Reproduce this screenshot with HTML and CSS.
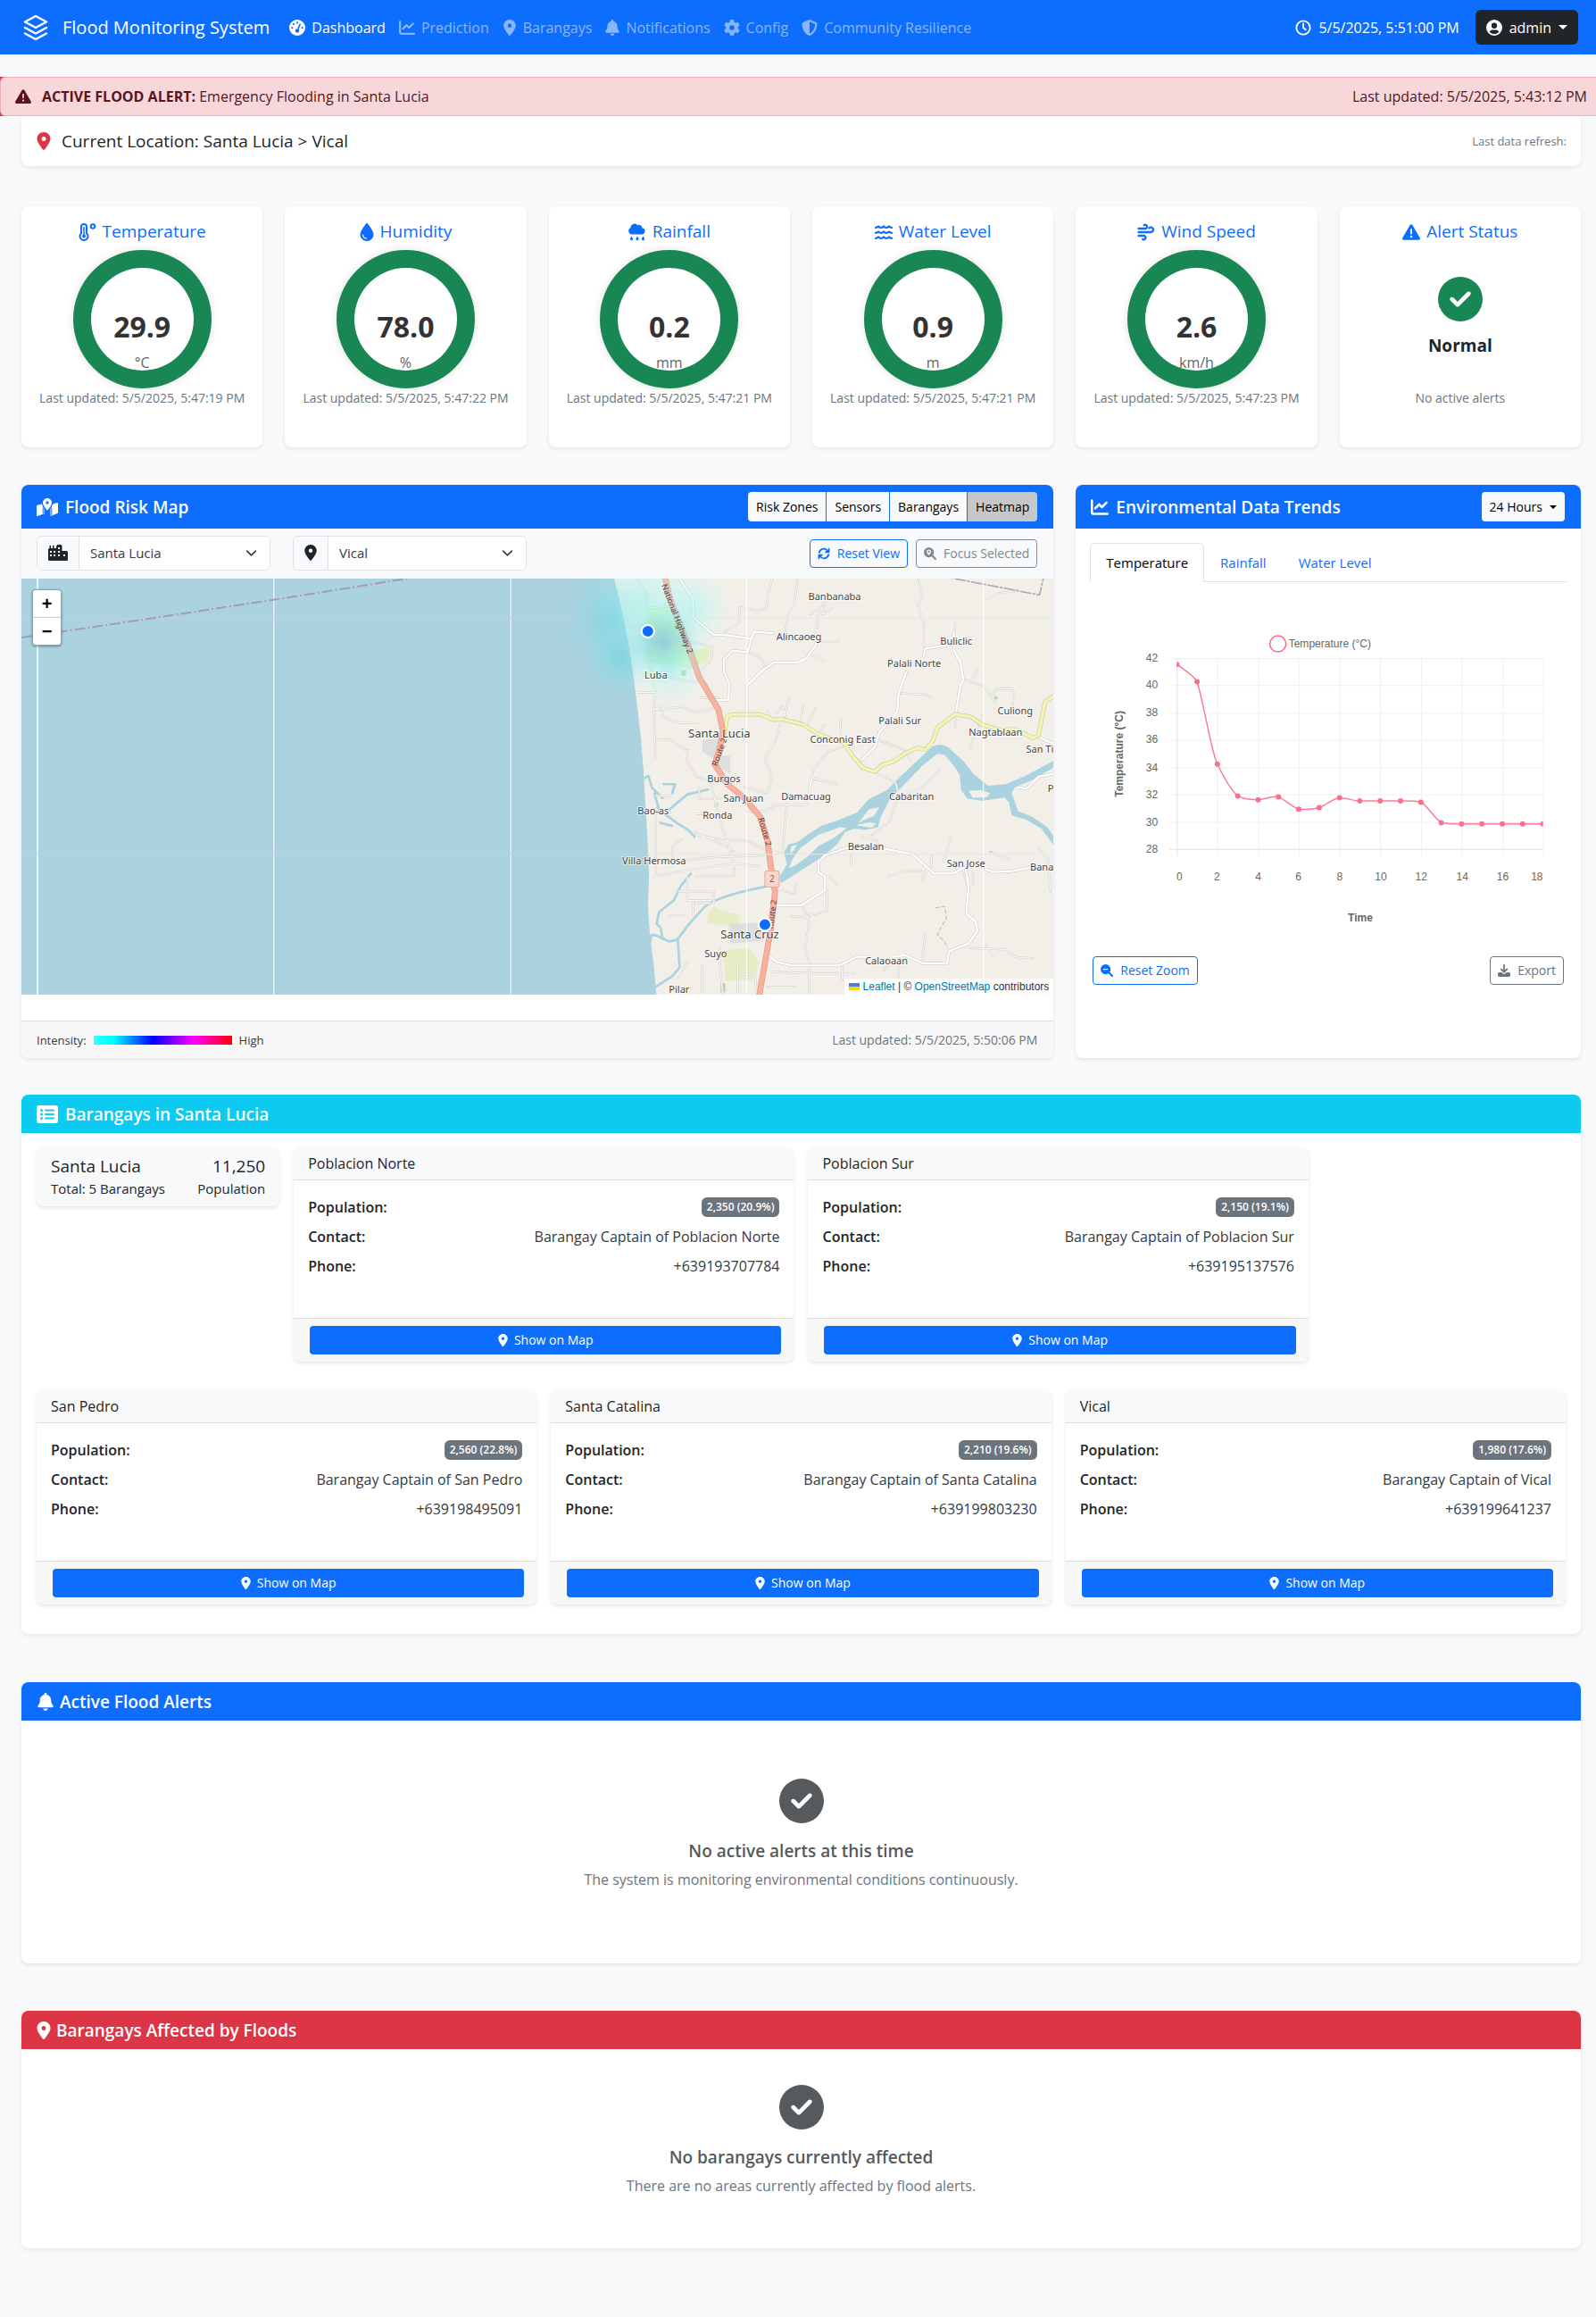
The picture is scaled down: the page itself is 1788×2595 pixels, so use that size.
FILE: index.html
```html
<!DOCTYPE html>
<html lang="en">
<head>
<meta charset="utf-8">
<meta name="viewport" content="width=device-width, initial-scale=1">
<title>Flood Monitoring System</title>
<link rel="stylesheet" href="styles.css">
</head>
<body>
<svg class="sprite" aria-hidden="true">
  <symbol id="i-layers" viewBox="0 0 28 30"><g fill="none" stroke="currentColor" stroke-width="2.500" stroke-linejoin="round" stroke-linecap="round"><path d="M14 2 26 8.500 14 15 2 8.500z"/><path d="M2 15l12 6.500L26 15M2 21.500L14 28l12-6.500"/></g></symbol>
  <symbol id="i-dash" viewBox="0 0 512 512"><path fill="currentColor" fill-rule="evenodd" d="M0 256a256 256 0 1 1 512 0A256 256 0 1 1 0 256zM288 96a32 32 0 1 0-64 0 32 32 0 1 0 64 0zM256 416c35.300 0 64-28.700 64-64 0-17.400-6.900-33.100-18.100-44.600L366 161.700c5.300-12.100-.2-26.300-12.300-31.600s-26.300.2-31.600 12.300L257.900 288H256c-35.300 0-64 28.700-64 64s28.700 64 64 64zM176 144a32 32 0 1 0-64 0 32 32 0 1 0 64 0zM96 288a32 32 0 1 0 0-64 32 32 0 1 0 0 64zm352-32a32 32 0 1 0-64 0 32 32 0 1 0 64 0z"/></symbol>
  <symbol id="i-chart" viewBox="0 0 512 512"><path fill="currentColor" d="M64 64c0-17.700-14.300-32-32-32S0 46.300 0 64V400c0 44.200 35.800 80 80 80H480c17.700 0 32-14.300 32-32s-14.300-32-32-32H80c-8.800 0-16-7.200-16-16V64zm406.600 86.600c12.500-12.500 12.500-32.800 0-45.300s-32.800-12.500-45.300 0L320 210.700l-57.400-57.400c-12.500-12.500-32.800-12.500-45.300 0l-112 112c-12.500 12.500-12.500 32.800 0 45.300s32.800 12.500 45.300 0L240 221.300l57.400 57.400c12.500 12.500 32.800 12.500 45.300 0l128-128z"/></symbol>
  <symbol id="i-pin" viewBox="0 0 384 512"><path fill="currentColor" d="M215.700 499.200C267 435 384 279.400 384 192C384 86 298 0 192 0S0 86 0 192c0 87.400 117 243 168.300 307.200c12.300 15.300 35.100 15.300 47.400 0zM192 128a64 64 0 1 1 0 128 64 64 0 1 1 0-128z"/></symbol>
  <symbol id="i-bell" viewBox="0 0 448 512"><path fill="currentColor" d="M224 0c-17.700 0-32 14.300-32 32V51.200C119 66 64 130.600 64 208v18.800c0 47-17.300 92.400-48.500 127.600l-7.400 8.300c-8.400 9.400-10.400 22.900-5.300 34.400S19.400 416 32 416H416c12.600 0 24-7.400 29.200-18.900s3.100-25-5.300-34.400l-7.400-8.300C401.300 319.200 384 273.900 384 226.800V208c0-77.400-55-142-128-156.800V32c0-17.700-14.300-32-32-32zm45.300 493.300c12-12 18.700-28.300 18.700-45.300H224 160c0 17 6.700 33.300 18.700 45.300s28.300 18.700 45.300 18.700s33.300-6.700 45.300-18.700z"/></symbol>
  <symbol id="i-gear" viewBox="0 0 512 512"><path fill="currentColor" d="M495.900 166.600c3.200 8.700 .5 18.400-6.400 24.600l-43.300 39.400c1.100 8.300 1.700 16.800 1.700 25.400s-.6 17.100-1.700 25.400l43.300 39.400c6.900 6.200 9.600 15.900 6.400 24.600c-4.400 11.900-9.700 23.300-15.800 34.300l-4.700 8.100c-6.600 11-14 21.400-22.100 31.200c-5.900 7.200-15.700 9.600-24.500 6.800l-55.700-17.700c-13.400 10.300-28.200 18.900-44 25.400l-12.500 57.100c-2 9.100-9 16.300-18.200 17.800c-13.800 2.300-28 3.500-42.500 3.500s-28.700-1.200-42.500-3.500c-9.200-1.500-16.200-8.700-18.200-17.800l-12.500-57.100c-15.800-6.500-30.600-15.100-44-25.400L83.100 425.900c-8.800 2.800-18.600 .3-24.500-6.800c-8.100-9.800-15.500-20.200-22.100-31.200l-4.700-8.100c-6.100-11-11.400-22.400-15.800-34.300c-3.200-8.700-.5-18.400 6.400-24.600l43.300-39.400C64.600 273.100 64 264.600 64 256s.6-17.100 1.700-25.400L22.400 191.200c-6.900-6.200-9.600-15.900-6.400-24.600c4.400-11.900 9.700-23.300 15.800-34.300l4.700-8.100c6.600-11 14-21.400 22.100-31.200c5.900-7.200 15.700-9.600 24.500-6.800l55.700 17.700c13.400-10.300 28.200-18.900 44-25.400l12.500-57.100c2-9.100 9-16.300 18.200-17.800C227.300 1.200 241.500 0 256 0s28.700 1.200 42.500 3.500c9.200 1.500 16.200 8.700 18.200 17.800l12.500 57.100c15.800 6.500 30.600 15.100 44 25.400l55.700-17.700c8.800-2.800 18.600-.3 24.500 6.800c8.100 9.800 15.500 20.200 22.100 31.200l4.700 8.100c6.100 11 11.400 22.400 15.800 34.300zM256 336a80 80 0 1 0 0-160 80 80 0 1 0 0 160z"/></symbol>
  <symbol id="i-shield" viewBox="0 0 512 512"><path fill="currentColor" d="M256 0c4.600 0 9.200 1 13.400 2.900L457.700 82.800c22 9.300 38.400 31 38.300 57.200c-.5 99.200-41.300 280.700-213.600 363.200c-16.700 8-36.100 8-52.800 0C57.300 420.700 16.500 239.200 16 140c-.1-26.200 16.300-47.900 38.300-57.200L242.700 2.900C246.800 1 251.400 0 256 0zm0 66.800V444.800C394 378 431.100 230.100 432 141.400L256 66.800z"/></symbol>
  <symbol id="i-clock" viewBox="0 0 20 20"><g fill="none" stroke="currentColor" stroke-width="2" stroke-linecap="round"><circle cx="10" cy="10" r="8.500"/><path d="M10 5v5l3 2.500"/></g></symbol>
  <symbol id="i-user" viewBox="0 0 20 20"><path fill="currentColor" fill-rule="evenodd" d="M10 0a10 10 0 1 1 0 20 10 10 0 0 1 0-20zm0 4a3.500 3.500 0 1 0 0 7 3.500 3.500 0 0 0 0-7zm-6 11.200A8 8 0 0 0 10 18a8 8 0 0 0 6-2.800C15 13.400 13.500 12.800 12 12.800H8c-1.500 0-3 .6-4 2.400z"/></symbol>
  <symbol id="i-warn" viewBox="0 0 512 512"><path fill="currentColor" d="M256 32c14.200 0 27.300 7.500 34.500 19.800l216 368c7.300 12.400 7.300 27.700 .2 40.100S486.300 480 472 480H40c-14.300 0-27.600-7.700-34.700-20.100s-7-27.800 .2-40.100l216-368C228.700 39.500 241.800 32 256 32zm0 128c-13.300 0-24 10.700-24 24V296c0 13.300 10.700 24 24 24s24-10.700 24-24V184c0-13.300-10.700-24-24-24zm32 224a32 32 0 1 0-64 0 32 32 0 1 0 64 0z"/></symbol>
  <symbol id="i-check" viewBox="0 0 512 512"><path fill="currentColor" d="M256 512A256 256 0 1 0 256 0a256 256 0 1 0 0 512zM369 209L241 337c-9.400 9.400-24.600 9.400-33.900 0l-64-64c-9.400-9.400-9.400-24.600 0-33.900s24.600-9.400 33.900 0l47 47L335 175c9.400-9.400 24.600-9.400 33.900 0s9.400 24.600 0 33.900z"/></symbol>
  <symbol id="i-temp" viewBox="0 0 20 20"><g fill="none" stroke="currentColor" stroke-width="2"><path d="M3 4a3 3 0 0 1 6 0v7.200a4.500 4.500 0 1 1-6 0z"/><circle cx="16" cy="3.500" r="2.300"/></g><path d="M6 4v11" stroke="currentColor" stroke-width="1.500"/><circle cx="6" cy="14.500" r="2" fill="currentColor"/></symbol>
  <symbol id="i-drop" viewBox="0 0 384 512"><path fill="currentColor" d="M192 512C86 512 0 426 0 320C0 228.800 130.200 57.700 166.600 11.700C172.600 4.200 181.500 0 191.100 0h1.800c9.600 0 18.500 4.200 24.500 11.700C253.800 57.700 384 228.800 384 320c0 106-86 192-192 192zM96 336c0-8.800-7.200-16-16-16s-16 7.200-16 16c0 61.900 50.100 112 112 112c8.800 0 16-7.200 16-16s-7.200-16-16-16c-44.200 0-80-35.800-80-80z"/></symbol>
  <symbol id="i-rain" viewBox="0 0 20 20"><path fill="currentColor" d="M4 12.500A4 4 0 0 1 2.300 5 4.500 4.500 0 0 1 10 2a4 4 0 0 1 5.500 3.300A3.700 3.700 0 0 1 16 12.500zM3.500 14.500c1 1.700 1.500 2.300 1.500 3.200a1.500 1.500 0 0 1-3 0c0-.9.500-1.500 1.500-3.200zm6.500 0c1 1.700 1.500 2.300 1.500 3.200a1.500 1.500 0 0 1-3 0c0-.9.500-1.500 1.500-3.200zm6.500 0c1 1.700 1.500 2.300 1.500 3.200a1.500 1.500 0 0 1-3 0c0-.9.500-1.500 1.500-3.200z"/></symbol>
  <symbol id="i-water" viewBox="0 0 22 20"><path fill="none" stroke="currentColor" stroke-width="2.400" stroke-linecap="round" d="M1 4.500c2 0 3-1.500 3.500-1.500 1 1 2 1.500 3.200 1.500S10 4 11 3c1 1 2 1.500 3.200 1.500S16.500 4 17.500 3c.5 0 1.500 1.500 3.500 1.500M1 11c2 0 3-1.500 3.500-1.500 1 1 2 1.500 3.200 1.500s2.300-.5 3.300-1.500c1 1 2 1.500 3.200 1.500s2.300-.5 3.300-1.500c.5 0 1.500 1.500 3.500 1.500M1 17.500c2 0 3-1.500 3.500-1.500 1 1 2 1.500 3.200 1.500S10 17 11 16c1 1 2 1.500 3.200 1.500s2.300-.5 3.300-1.500c.5 0 1.500 1.500 3.500 1.500"/></symbol>
  <symbol id="i-wind" viewBox="0 0 20 20"><path fill="none" stroke="currentColor" stroke-width="2.300" stroke-linecap="round" d="M1.500 6H9.500a2.200 2.200 0 1 0-1.800-4M1.500 10h14a2.700 2.700 0 1 0-2.200-4.500M1.500 14h6.500a2.200 2.200 0 1 1-1.800 4"/></symbol>
  <symbol id="i-map" viewBox="0 0 24 20"><path fill="currentColor" fill-rule="evenodd" d="M12 0a5 5 0 0 1 5 5c0 2.600-3 6.500-4.300 8-.4.500-1 .5-1.400 0C10 11.500 7 7.600 7 5a5 5 0 0 1 5-5zm0 3.300a1.700 1.700 0 1 0 0 3.400 1.700 1.700 0 0 0 0-3.400zM6 6.500c.4 2.200 1.600 4.300 2.500 5.700V17.500l7 2V12c1.200-1.700 2.200-3.600 2.500-5.200L23 5c.6-.2 1 .1 1 .7V16c0 .5-.3.900-.8 1.100L16.500 19.700 8 17.500 1 20c-.6.200-1-.1-1-.7V8.800c0-.4.300-.8.700-1z"/><path d="M7.200 11v6.500M16.800 11v8" stroke="#0d6efd" stroke-width="1"/></symbol>
  <symbol id="i-city" viewBox="0 0 22 18"><path fill="currentColor" d="M0 5 1.500 4V1h1.500v3H5V1h1.500v3H9V2.500C9 1.500 10 0 11 0h2.500C15 0 15.500 1 15.500 2v5H20c1.200 0 2 .8 2 2v7.500c0 .9-.6 1.500-1.500 1.500h-19C.6 18 0 17.400 0 16.500z"/><path fill="#f8f9fa" d="M2 7h2v2H2zm4 0h2v2H6zm-4 4h2v2H2zm4 0h2v2H6zm5-8h2v2h-2zm0 4h2v2h-2zm0 4h2v2h-2zm6 0h2v2h-2z"/></symbol>
  <symbol id="i-sync" viewBox="0 0 20 20"><g fill="none" stroke="currentColor" stroke-width="2.600" stroke-linecap="round" stroke-linejoin="round"><path d="M2.500 8.500A7.500 7.500 0 0 1 15.500 5L18 7.500M17.500 11.500A7.500 7.500 0 0 1 4.500 15L2 12.500M18 2.500v5h-5M2 17.500v-5h5"/></g></symbol>
  <symbol id="i-focus" viewBox="0 0 20 20"><circle cx="8" cy="8" r="8" fill="currentColor"/><path d="m13 13 5.500 5.500" stroke="currentColor" stroke-width="3" stroke-linecap="round"/><path fill="#f8f9fa" fill-rule="evenodd" d="M8 3.500A3.500 3.500 0 0 1 11.500 7C11.500 9 9.500 11.300 8 12.500 6.500 11.300 4.500 9 4.500 7A3.500 3.500 0 0 1 8 3.500zm0 2a1.500 1.500 0 1 0 0 3 1.500 1.500 0 0 0 0-3z"/></symbol>
  <symbol id="i-minus" viewBox="0 0 20 20"><circle cx="8" cy="8" r="8" fill="currentColor"/><path d="m13 13 5.500 5.500" stroke="currentColor" stroke-width="3" stroke-linecap="round"/><path d="M5 8h6" stroke="#fff" stroke-width="2" stroke-linecap="round"/></symbol>
  <symbol id="i-down" viewBox="0 0 20 20"><path fill="currentColor" d="M8.700 1.300a1.300 1.300 0 0 1 2.600 0v8l2.600-2.500c1.200-1 2.800.6 1.800 1.800L11 13.300c-.6.600-1.400.6-2 0L4.300 8.600c-1-1.200.6-2.800 1.800-1.800l2.600 2.500zM2.500 13h3.800l1.500 1.500c1.200 1.200 3.200 1.200 4.400 0l1.500-1.500h3.800c1.400 0 2.500 1.100 2.500 2.500v2c0 1.400-1.100 2.500-2.500 2.500h-15C1.100 20 0 18.900 0 17.500v-2C0 14.100 1.100 13 2.500 13z"/></symbol>
  <symbol id="i-list" viewBox="0 0 24 20"><rect width="24" height="20" rx="3" fill="currentColor"/><g fill="#0dcaf0"><circle cx="5.500" cy="5.500" r="1.500"/><circle cx="5.500" cy="10" r="1.500"/><circle cx="5.500" cy="14.500" r="1.500"/><rect x="9" y="4.500" width="11" height="2" rx="1"/><rect x="9" y="9" width="11" height="2" rx="1"/><rect x="9" y="13.500" width="11" height="2" rx="1"/></g></symbol>
</svg>

<nav class="navbar" aria-label="Main">
  <a class="brand" href="#"><svg class="ic ic-brand"><use href="#i-layers"/></svg>Flood Monitoring System</a>
  <div class="nav-links">
    <a class="active" href="#"><svg class="ic"><use href="#i-dash"/></svg>Dashboard</a>
    <a href="#"><svg class="ic"><use href="#i-chart"/></svg>Prediction</a>
    <a href="#"><svg class="ic ic-narrow"><use href="#i-pin"/></svg>Barangays</a>
    <a href="#"><svg class="ic ic-narrow"><use href="#i-bell"/></svg>Notifications</a>
    <a href="#"><svg class="ic"><use href="#i-gear"/></svg>Config</a>
    <a href="#"><svg class="ic"><use href="#i-shield"/></svg>Community Resilience</a>
  </div>
  <div class="nav-clock"><svg class="ic"><use href="#i-clock"/></svg>5/5/2025, 5:51:00 PM</div>
  <button class="user-btn" type="button"><svg class="ic"><use href="#i-user"/></svg>admin<span class="caret"></span></button>
</nav>

<div class="alert-wrap">
  <div class="alert" role="alert">
    <svg class="ic"><use href="#i-warn"/></svg>
    <p><strong>ACTIVE FLOOD ALERT:</strong> Emergency Flooding in Santa Lucia</p>
    <span class="push">Last updated: 5/5/2025, 5:43:12 PM</span>
  </div>
</div>

<main class="page">
  <section class="location">
    <svg class="ic ic-loc"><use href="#i-pin"/></svg>
    <h1>Current Location: Santa Lucia &gt; Vical</h1>
    <span class="push small muted">Last data refresh:</span>
  </section>

  <section class="grid gauges">
    <article class="card gauge"><h2><svg class="ic"><use href="#i-temp"/></svg>Temperature</h2><div class="ring"><div class="dial"><b>29.9</b><span>°C</span></div></div><p>Last updated: 5/5/2025, 5:47:19 PM</p></article>
    <article class="card gauge"><h2><svg class="ic ic-narrow"><use href="#i-drop"/></svg>Humidity</h2><div class="ring"><div class="dial"><b>78.0</b><span>%</span></div></div><p>Last updated: 5/5/2025, 5:47:22 PM</p></article>
    <article class="card gauge"><h2><svg class="ic"><use href="#i-rain"/></svg>Rainfall</h2><div class="ring"><div class="dial"><b>0.2</b><span>mm</span></div></div><p>Last updated: 5/5/2025, 5:47:21 PM</p></article>
    <article class="card gauge"><h2><svg class="ic"><use href="#i-water"/></svg>Water Level</h2><div class="ring"><div class="dial"><b>0.9</b><span>m</span></div></div><p>Last updated: 5/5/2025, 5:47:21 PM</p></article>
    <article class="card gauge"><h2><svg class="ic"><use href="#i-wind"/></svg>Wind Speed</h2><div class="ring"><div class="dial"><b>2.6</b><span>km/h</span></div></div><p>Last updated: 5/5/2025, 5:47:23 PM</p></article>
    <article class="card gauge"><h2><svg class="ic"><use href="#i-warn"/></svg>Alert Status</h2><div class="status"><svg class="ic-big"><use href="#i-check"/></svg><strong>Normal</strong></div><p>No active alerts</p></article>
  </section>

  <section class="grid panels">
    <article class="card map-card">
      <header class="card-head tall"><svg class="ic-wide"><use href="#i-map"/></svg><h2>Flood Risk Map</h2>
        <div class="btn-group push"><button type="button">Risk Zones</button><button type="button">Sensors</button><button type="button">Barangays</button><button type="button" class="on">Heatmap</button></div>
      </header>
      <div class="toolbar">
        <div class="pick"><label for="town" aria-label="Municipality"><svg class="ic-city"><use href="#i-city"/></svg></label><select id="town"><option>Santa Lucia</option></select></div>
        <div class="pick"><label for="brgy" aria-label="Barangay"><svg class="ic-pin"><use href="#i-pin"/></svg></label><select id="brgy"><option>Vical</option></select></div>
        <button type="button" class="btn blue push"><svg class="ic-sm"><use href="#i-sync"/></svg>Reset View</button>
        <button type="button" class="btn grey faded"><svg class="ic-sm"><use href="#i-focus"/></svg>Focus Selected</button>
      </div>
      <div class="map">
        <svg class="map-art" viewBox="0 0 1155 466" preserveAspectRatio="xMinYMin slice" role="img" aria-label="Map of Santa Lucia">
          <defs>
            <radialGradient id="hc"><stop offset="0" stop-color="#5fd3dc" stop-opacity=".5"/><stop offset="1" stop-color="#7fe8ee" stop-opacity="0"/></radialGradient>
            <radialGradient id="hl"><stop offset="0" stop-color="#8ff5ee" stop-opacity=".45"/><stop offset="1" stop-color="#aff" stop-opacity="0"/></radialGradient>
            <radialGradient id="hb"><stop offset="0" stop-color="#4a9fe0" stop-opacity=".55"/><stop offset=".5" stop-color="#5fd0dc" stop-opacity=".35"/><stop offset="1" stop-color="#7ff" stop-opacity="0"/></radialGradient>
          </defs>
          <rect width="1155" height="466" fill="#f2efe9"/>
          <g class="geo" transform="translate(675 0) scale(.3333)">
            <path fill="#aad3df" d="M-2100-10H-38L-20 60 0 150 15 230 30 330 45 450 55 540 63 640 70 760 78 900 82 1000 78 1100 85 1200 97 1290 108 1410H-2100z"/>
            <path fill="#e2f0c0" d="M75 100l90-8 35 80 15 70 70-10-5 45-60 25-40-10-110-10z"/>
            <path fill="#e6edc5" d="M300 1100l30 15 60 15-15 40-100-15 10-40zM330 1250l90-10 30 50-20 60-90 0z"/>
            <g fill="#dedede"><path d="M262 540l60-3 8 35-25 35-45-25zM320 595h35v60l-40-20zM350 1160l110-5 5 60-110 10z"/></g>
            <g fill="#b5d6b5"><path d="M190 308h16v18h-16zM302 752h12v14h-12zM322 1358h16v30h-16zM1240 395h12v10h-12zM1226 914h10v8h-10z"/></g>
            <path class="water" d="M520 1000 545 960 535 920 550 892 580 885 610 862 660 830 720 810 780 785 820 740 880 710 930 660 1000 595 1035 562 1060 557 1085 565 1140 615 1170 655 1220 695 1280 690 1350 660 1440 612V635L1360 680 1310 700 1300 720 1320 780 1370 800 1420 835 1440 865V895L1400 840 1350 810 1300 795 1290 750 1275 735 1200 746 1150 738 1130 710 1125 660 1110 635 1075 592 1050 588 1000 628 940 690 890 740 860 800 850 835 810 843 770 840 740 850 715 890 670 930 610 968 560 1000 525 1022z"/>
            <path class="land" d="M562 945 590 905 650 860 725 834 745 838 700 872 650 898 612 935 575 962 552 972zM556 925l2-25 22-8-14 22zM785 820l35-45 35-8-18 30-18 6zM775 828l45-10 25 4-15 14zM1155 712l40-2 32 10-12 14-46 2z"/>
            <g class="river"><path d="M500 1028C420 1045 330 1060 270 1100L220 1155 178 1210 185 1305 160 1335 105 1370"/><path d="M178 1212L150 1218 112 1200 90 1195 85 1225M128 1210L120 1170 108 1160 115 1120 165 1080 190 1030 222 990"/><path d="M65 670l15-8 12 40 35 35M100 720l15 55 60 45 40 25 20 22M150 775l60-50 70-17M130 690l40 0-10 30 5-20M120 820l40 10"/></g>
            <g class="lane">
              <path id="lanes" d="M40 0l30 40 5 60-5 90 15 100 18 90-5 60 5 160M45 382h58M75 100l100-10M10 160h65M75 195l160 20 60 15-5 45-30 30M105 320l90 20 80 15M105 440l90-10 40 20 70-15M100 440l30-15-5 40 60 20 60 0M210 575v40l30 50 70 25M105 540h50l55 40M290 690l30 120 50 150-5 40H240M105 730h50M250 700v40h70M240 790h50M240 860l100 20 70 0 60 30M235 850l70 30 60 35M110 955l190-20 150-5 60-10M100 1000l130-25 140-20 80 10M160 940v-40l30-25M105 770v230M545 755l-15 160-60 10M400 700l80 20 15-55-25-60 35-55 20-70M410 780h60l40-20h100l20-90 80 20M620 740l0-40 15-60 50-60 60-20M480 445l10 30M510 450l20-20 10 30M550 405l-15 60M600 430l-10 50M640 435l-25 55M670 490l-15 25M725 470v50M385 95l60 15 30-10 10-60 10-40M385 100l0 50-50 30M540 175l10-60 20-30 10-80M415 245l45 25 10 30M625 120l50-40-10 40 30-20M640 190l15-90M640 210h80M600 245l70 30M985 0l15 60-15 30 20 60v80M1110 150l-5 50M1205 75l50-25 60-10M930 385l80 5 20 10M1145 340l60 20 40 55M1170 330l15-20M1300 370l10 20-15 60M1230 395l20-25h50M860 545l80 30 20 35M1060 640l-60 60-50 20M850 655l60 30 10 40-30 90-60 45M760 930v30M800 870l50 10M885 1000l60-20 50 0M1070 950l25-80M1030 930v40M1000 1010l10-30M1200 460l-40 110M1110 450l0 50M1390 910l30 30 10 110M1290 940l-60-20M690 1000l20 25M600 1100l20 60-15 80 20 60M560 1135h60M680 1045v70l-60 15M500 1040l70 15 5-35M1010 1190l-10 90M910 1265l-40 50M920 1300v50l40 30M1160 1240l120 5 30 25 60 5M1215 1230l20 40M730 1300v50M620 1300v100M500 1320l120 5 150 0M480 1370h90M380 1330h60v50M380 1290v100M210 1290l-30 50M260 1300v90M320 1240l0 60 10 100M180 1050h120v40h-70v40M210 1000v80h80M150 1130h50M255 400h60M1140 990l10 40M1170 985v40"/></g>
            <g class="lane-top"><use href="#lanes"/></g>
            <g class="road-case"><path id="roads" d="M185 0l45 70 0 60 70 60 30-2 95 14 12-24 62 6M425 202l-12 45-50-5-30 30 0 40 18 40-2 55h-42l-8 12M410 455V360l50-50 40-28h80l30-15 30-40 5-15M795 610l45-45 15-50 40-40 20-30 5-60 25-70M1112 450l15-90 10-20-10-60-22-40 0-60M1105 220l-95 15-5 25M505 1098l90-2 78-50V1000l-22-15 0-35 20-20 70-25 60-2M865 905l100 20 75 65h60l40-20M1145 975l10 60-8 90 30 25 8 30-30 45-65 25-8 42h-80l-60-28-40 6M480 1262l30 25 50 12h160l60-30 40 2M1210 975l30 10 60-3 80-15M1440 655l-50 10-40 40-30-5M1390 532l50 22"/></g>
            <g class="road"><use href="#roads"/></g>
            <path class="sec-case" id="sec" d="M335 520 345 462 360 456 455 456 500 474 530 472 600 490 655 525 735 550 765 595 800 635 840 648 865 625 900 615 945 585 985 568 1010 575 1035 545 1050 500 1110 455 1165 465 1200 490 1260 508 1310 505 1370 535 1390 525 1412 412 1450 390"/>
            <use class="sec" href="#secline"/>
            <path class="sec" d="M335 520 345 462 360 456 455 456 500 474 530 472 600 490 655 525 735 550 765 595 800 635 840 648 865 625 900 615 945 585 985 568 1010 575 1035 545 1050 500 1110 455 1165 465 1200 490 1260 508 1310 505 1370 535 1390 525 1412 412 1450 390"/>
            <path class="hwy-case" d="M135-10 150 60 215 230 250 330 315 440 330 510 322 560 303 625 345 690 400 735 455 800 480 880 490 960 505 1050 490 1180 450 1410"/>
            <path class="hwy" d="M135-10 150 60 215 230 250 330 315 440 330 510 322 560 303 625 345 690 400 735 455 800 480 880 490 960 505 1050 490 1180 450 1410"/>
            <path class="track" d="M1045 1105l30-5 5 40-20 35-10 20 25 25 8 20"/>
            <path class="border" d="M1055-10l338 65 15-65"/>
          </g>
          <g class="tiles"><path stroke="#d9fbff" stroke-width="2" d="M18 0v466"/><path stroke="#fff" d="M282.500 0v466M547.500 0v466M811.500 0v466M1076.500 0v466"/><path stroke="#bcd3da" d="M0 44.500h672M0 308.500h700"/><path stroke="#e8e8e4" d="M672 44.500h483M700 308.500h455"/></g>
          <path d="M0 66C150 44 290 23 431 0" fill="none" stroke="#a79ab8" stroke-width="2" stroke-dasharray="12 3 2 3"/>
          <circle cx="660" cy="45" r="55" fill="url(#hc)"/><circle cx="750" cy="35" r="45" fill="url(#hl)"/><circle cx="700" cy="25" r="60" fill="url(#hl)"/><circle cx="670" cy="90" r="40" fill="url(#hc)"/><circle cx="718" cy="72" r="45" fill="url(#hb)"/><circle cx="725" cy="100" r="45" fill="url(#hl)"/>
          <g class="labels">
            <text x="910" y="24">Banbanaba</text><text x="870" y="69">Alincaoeg</text><text x="1046" y="74">Buliclic</text><text x="999" y="99">Palali Norte</text><text x="710" y="112">Luba</text><text x="983" y="163">Palali Sur</text><text x="1112" y="152">Culiong</text><text x="1090" y="176">Nagtablaan</text><text class="edge" x="1155" y="195">San Ti</text><text class="town" x="781" y="178">Santa Lucia</text><text x="919" y="184">Conconig East</text><text x="786" y="228">Burgos</text><text x="808" y="250">San Juan</text><text x="878" y="248">Damacuag</text><text x="996" y="248">Cabaritan</text><text x="779" y="269">Ronda</text><text x="707" y="264">Bao-as</text><text x="945" y="304">Besalan</text><text x="708" y="320">Villa Hermosa</text><text x="1057" y="323">San Jose</text><text class="edge" x="1155" y="327">Bana</text><text class="edge" x="1155" y="239">P</text><text class="town" x="815" y="403">Santa Cruz</text><text x="777" y="424">Suyo</text><text x="968" y="432">Calaoaan</text><text x="736" y="463">Pilar</text>
          </g>
          <g class="road-names"><text transform="translate(731 46) rotate(69)">National Highway 2</text><text transform="translate(784 195) rotate(-70)">Route 2</text><text transform="translate(829 284) rotate(74)">Route 2</text><text transform="translate(843 376) rotate(-82)">Route 2</text></g>
          <rect x="832" y="327" width="16" height="18" rx="2" fill="#f9d6cd" stroke="#e8a997"/><text class="ref" x="840" y="340">2</text>
          <g fill="#0d6efd" stroke="#fff" stroke-width="2"><circle cx="701" cy="59" r="7"/><circle cx="832" cy="387" r="7"/></g>
        </svg>
        <div class="zoomer"><button type="button" aria-label="Zoom in">+</button><button type="button" aria-label="Zoom out">−</button></div>
        <div class="credit"><span class="flag"></span><a href="#">Leaflet</a> | © <a href="#">OpenStreetMap</a> contributors</div>
      </div>
      <footer class="map-foot"><span>Intensity:</span><span class="heat-scale"></span><span>High</span><span class="push muted foot-time">Last updated: 5/5/2025, 5:50:06 PM</span></footer>
    </article>

    <article class="card trend-card">
      <header class="card-head tall"><svg class="ic-head"><use href="#i-chart"/></svg><h2>Environmental Data Trends</h2><button type="button" class="range push">24 Hours<span class="caret"></span></button></header>
      <div class="trend-body">
        <div class="tabs" role="tablist"><button type="button" role="tab" aria-selected="true" class="on">Temperature</button><button type="button" role="tab">Rainfall</button><button type="button" role="tab">Water Level</button></div>
        <svg class="chart" viewBox="0 0 532 350" role="img" aria-label="Temperature over time">
          <g stroke="#f0f0f0"><path d="M89 37.500H506M89 67.500H506M89 98.500H506M89 128.500H506M89 159.500H506M89 189.500H506M89 220.500H506"/><path d="M142.500 37V258M188.500 37V258M233.500 37V258M279.500 37V258M324.500 37V258M370.500 37V258M415.500 37V258M461.500 37V258M506.500 37V258"/></g>
          <path d="M97.500 37V258M89 250.500H506" stroke="#e2e2e2"/>
          <circle cx="210" cy="21" r="9" fill="#fff" stroke="#ff6384" stroke-width="1.500"/><text x="222" y="25">Temperature (°C)</text>
          <g text-anchor="end"><text x="76" y="41">42</text><text x="76" y="71">40</text><text x="76" y="102">38</text><text x="76" y="132">36</text><text x="76" y="163">34</text><text x="76" y="193">32</text><text x="76" y="224">30</text><text x="76" y="254">28</text><text x="506" y="285">18</text></g>
          <g text-anchor="middle"><text x="100" y="285">0</text><text x="142" y="285">2</text><text x="188" y="285">4</text><text x="233" y="285">6</text><text x="279" y="285">8</text><text x="325" y="285">10</text><text x="370" y="285">12</text><text x="416" y="285">14</text><text x="461" y="285">16</text><text class="b" x="302" y="331">Time</text><text class="b" transform="translate(37 144) rotate(-90)">Temperature (°C)</text></g>
          <path fill="none" stroke="#f77d97" stroke-width="1.500" d="M97 43.800C106 51 115 55 119.700 63.300 128 90 135 140 142.400 155.300 149 169 157 184 165.200 190.800 172 195 180 195 187.900 195.200 195 195 203 190 210.600 192 218 195 226 203 233.300 205.600 241 206 249 206 256.100 203.800 264 201 271 194 278.800 193 286 193 294 196 301.500 196.500H347C355 196.500 362 196 369.700 197.800 377 202 385 216 392.400 220.800 400 222 407 222 415.100 222H506"/>
          <g fill="#f9708d"><path d="M97 41a3 3 0 0 1 0 6zM506 219a3 3 0 0 0 0 6z"/><circle cx="119.700" cy="63.300" r="3"/><circle cx="142.400" cy="155.300" r="3"/><circle cx="165.200" cy="190.800" r="3"/><circle cx="187.900" cy="195.200" r="3"/><circle cx="210.600" cy="192" r="3"/><circle cx="233.300" cy="205.600" r="3"/><circle cx="256.100" cy="203.800" r="3"/><circle cx="278.800" cy="193" r="3"/><circle cx="301.500" cy="196.500" r="3"/><circle cx="324.200" cy="196.500" r="3"/><circle cx="347" cy="196.500" r="3"/><circle cx="369.700" cy="197.800" r="3"/><circle cx="392.400" cy="220.800" r="3"/><circle cx="415.100" cy="222" r="3"/><circle cx="437.800" cy="222" r="3"/><circle cx="460.600" cy="222" r="3"/><circle cx="483.300" cy="222" r="3"/></g>
        </svg>
        <div class="trend-actions"><button type="button" class="btn blue"><svg class="ic-sm"><use href="#i-minus"/></svg>Reset Zoom</button><button type="button" class="btn grey"><svg class="ic-sm"><use href="#i-down"/></svg>Export</button></div>
      </div>
    </article>
  </section>

  <section class="card barangays">
    <header class="card-head cyan"><svg class="ic-wide"><use href="#i-list"/></svg><h2>Barangays in Santa Lucia</h2></header>
    <div class="brgy-grid">
      <div class="tile summary"><div><h3>Santa Lucia</h3><p>Total: 5 Barangays</p></div><div class="right"><h3>11,250</h3><p>Population</p></div></div>
      <article class="tile brgy"><h3>Poblacion Norte</h3><dl><div><dt>Population:</dt><dd><span class="badge">2,350 (20.9%)</span></dd></div><div><dt>Contact:</dt><dd>Barangay Captain of Poblacion Norte</dd></div><div><dt>Phone:</dt><dd>+639193707784</dd></div></dl><footer><button type="button"><svg class="ic-btn"><use href="#i-pin"/></svg>Show on Map</button></footer></article>
      <article class="tile brgy"><h3>Poblacion Sur</h3><dl><div><dt>Population:</dt><dd><span class="badge">2,150 (19.1%)</span></dd></div><div><dt>Contact:</dt><dd>Barangay Captain of Poblacion Sur</dd></div><div><dt>Phone:</dt><dd>+639195137576</dd></div></dl><footer><button type="button"><svg class="ic-btn"><use href="#i-pin"/></svg>Show on Map</button></footer></article>
      <article class="tile brgy"><h3>San Pedro</h3><dl><div><dt>Population:</dt><dd><span class="badge">2,560 (22.8%)</span></dd></div><div><dt>Contact:</dt><dd>Barangay Captain of San Pedro</dd></div><div><dt>Phone:</dt><dd>+639198495091</dd></div></dl><footer><button type="button"><svg class="ic-btn"><use href="#i-pin"/></svg>Show on Map</button></footer></article>
      <article class="tile brgy"><h3>Santa Catalina</h3><dl><div><dt>Population:</dt><dd><span class="badge">2,210 (19.6%)</span></dd></div><div><dt>Contact:</dt><dd>Barangay Captain of Santa Catalina</dd></div><div><dt>Phone:</dt><dd>+639199803230</dd></div></dl><footer><button type="button"><svg class="ic-btn"><use href="#i-pin"/></svg>Show on Map</button></footer></article>
      <article class="tile brgy"><h3>Vical</h3><dl><div><dt>Population:</dt><dd><span class="badge">1,980 (17.6%)</span></dd></div><div><dt>Contact:</dt><dd>Barangay Captain of Vical</dd></div><div><dt>Phone:</dt><dd>+639199641237</dd></div></dl><footer><button type="button"><svg class="ic-btn"><use href="#i-pin"/></svg>Show on Map</button></footer></article>
    </div>
  </section>

  <section class="card alerts">
    <header class="card-head tight"><svg class="ic-head"><use href="#i-bell"/></svg><h2>Active Flood Alerts</h2></header>
    <div class="empty roomy"><svg class="ic-big"><use href="#i-check"/></svg><h3>No active alerts at this time</h3><p>The system is monitoring environmental conditions continuously.</p></div>
  </section>

  <section class="card affected">
    <header class="card-head red tight"><svg class="ic-pinhead"><use href="#i-pin"/></svg><h2>Barangays Affected by Floods</h2></header>
    <div class="empty"><svg class="ic-big"><use href="#i-check"/></svg><h3>No barangays currently affected</h3><p>There are no areas currently affected by flood alerts.</p></div>
  </section>
</main>
</body>
</html>
```

FILE: styles.css
```css
* { box-sizing: border-box; }
body { margin: 0; background: #f8f9fa; color: #212529; font: 16px/24px "Open Sans", "Noto Sans", sans-serif; }
h1, h2, h3, p, dl, dd { margin: 0; }
button, select { font: inherit; color: inherit; }
button { cursor: pointer; white-space: nowrap; }
a { text-decoration: none; }
svg { display: block; flex: none; }
.sprite { position: absolute; width: 0; height: 0; }
.push { margin-left: auto; }
.muted { color: #6c757d; }
.small { font-size: 13px; }

.ic { width: 18px; height: 18px; }
.ic-narrow { width: 16px; }
.ic-brand { width: 30px; height: 30px; }
.ic-loc { width: 18px; height: 20px; color: #dc3545; }
.ic-wide { width: 24px; height: 20px; }
.ic-head { width: 20px; height: 20px; }
.ic-pinhead { width: 16px; height: 20px; }
.ic-sm { width: 14px; height: 14px; }
.ic-big { width: 50px; height: 50px; }
.ic-city { width: 22px; height: 18px; }
.ic-pin { width: 14px; height: 18px; }
.ic-btn { width: 11px; height: 14px; }
.caret { border: 5px solid transparent; border-top-color: currentColor; border-bottom: 0; }

.navbar { display: flex; align-items: center; min-height: 61px; padding: 0 20px 0 25px; background: #0d6efd; color: #fff; }
.brand { display: flex; align-items: center; gap: 15px; color: #fff; font-size: 20px; }
.nav-links { display: flex; gap: 15px; margin-left: 22px; }
.nav-links a { display: flex; align-items: center; gap: 7px; color: rgba(255, 255, 255, .5); }
.nav-links .active { color: #fff; }
.nav-clock { display: flex; align-items: center; gap: 8px; margin-left: auto; }
.user-btn { display: flex; align-items: center; gap: 8px; height: 39px; margin-left: 18px; padding: 0 12px; border: 0; border-radius: 6px; background: #212529; color: #fff; }

.alert-wrap { margin-top: 25px; background: #dc3545; overflow: hidden; }
.alert { display: flex; align-items: center; gap: 12px; min-height: 44px; padding: 0 10px 0 16px; border: 1px solid #f1aeb5; border-right: 0; border-radius: 6px 0 0 6px; background: #f8d7da; color: #58151c; }

.page { padding: 0 17px 76px 24px; }
.location { display: flex; align-items: center; gap: 11px; min-height: 56px; padding: 0 16px; border-radius: 0 0 8px 8px; background: #fff; box-shadow: 0 2px 4px rgba(0, 0, 0, .08); }
.location h1 { font-size: 19px; font-weight: 500; }

.card { border-radius: 8px; background: #fff; box-shadow: 0 2px 4px rgba(0, 0, 0, .08); }
.grid { display: grid; grid-template-columns: repeat(12, minmax(0, 1fr)); gap: 25px; }
.gauges { margin-top: 45px; }
.gauge { grid-column: span 2; min-height: 270px; padding: 16px 8px; text-align: center; }
.gauge h2 { display: flex; justify-content: center; align-items: center; gap: 7px; margin-bottom: 8px; color: #0d6efd; font-size: 19px; font-weight: 500; line-height: 25px; }
.gauge h2 .ic { width: 20px; height: 20px; }
.gauge h2 .ic-narrow { width: 16px; }
.gauge p { color: #6c757d; font-size: 14px; line-height: 22px; }
.ring { width: 155px; margin: 0 auto; border: 20px solid #198754; border-radius: 50%; background: #198754; box-shadow: 0 0 10px rgba(0, 0, 0, .12); }
.dial { display: flex; flex-direction: column; align-items: center; height: 115px; padding-top: 44px; border-radius: 50%; background: #fff; overflow: hidden; }
.dial b { color: #333; font-size: 32px; line-height: 44px; }
.dial span { padding-top: 6px; color: #666; font-size: 16px; line-height: 24px; }
.status { display: flex; flex-direction: column; align-items: center; min-height: 155px; padding-top: 30px; color: #198754; }
.status strong { margin-top: 13px; color: #212529; font-size: 19px; font-weight: 700; line-height: 28px; }

.panels { margin-top: 42px; }
.map-card { grid-column: span 8; }
.trend-card { grid-column: span 4; }
.card-head { display: flex; align-items: center; gap: 8px; min-height: 43px; padding: 0 18px 0 17px; border-radius: 8px 8px 0 0; background: #0d6efd; color: #fff; }
.card-head h2 { font-size: 19px; font-weight: 600; }
.card-head.tall { min-height: 49px; }
.card-head.tight { gap: 6px; }
.card-head.cyan { background: #0dcaf0; }
.card-head.red { background: #dc3545; }
.btn-group { display: flex; gap: 1px; }
.btn-group button { height: 33px; padding: 0 9px; border: 0; background: #f8f9fa; color: #000; font-size: 14px; }
.btn-group button:first-child { border-radius: 4px 0 0 4px; }
.btn-group button:last-child { border-radius: 0 4px 4px 0; }
.btn-group .on { background: #c6c7c8; }
.toolbar { display: flex; align-items: center; gap: 25px; min-height: 56px; padding: 0 18px 0 17px; background: #f8f9fa; }
.toolbar .btn + .btn { margin-left: -16px; }
.pick { display: flex; width: 262px; height: 39px; margin-bottom: 2px; border: 1px solid #dee2e6; border-radius: 6px; overflow: hidden; }
.pick label { display: flex; align-items: center; padding: 0 12px; border-right: 1px solid #dee2e6; background: #f8f9fa; }
.pick select { flex: 1; min-width: 0; padding: 0 12px; border: 0; appearance: none; background: #fff url("data:image/svg+xml,%3Csvg xmlns='http://www.w3.org/2000/svg' viewBox='0 0 16 16'%3E%3Cpath fill='none' stroke='%23343a40' stroke-width='2' stroke-linecap='round' stroke-linejoin='round' d='m2 5 6 6 6-6'/%3E%3C/svg%3E") no-repeat right 14px center / 13px; color: #343a40; font-size: 15px; }
.btn { display: flex; align-items: center; gap: 8px; height: 32px; padding: 0 8px; border: 1px solid; border-radius: 4px; background: transparent; font-size: 14px; }
.btn.blue { border-color: #0d6efd; color: #0d6efd; }
.btn.grey { border-color: #6c757d; color: #6c757d; }
.btn.faded { opacity: .85; }

.map { position: relative; height: 466px; overflow: hidden; }
.map-art { width: 100%; height: 100%; }
.water { fill: #aad3df; }
.land { fill: #f2efe9; }
.river, .lane, .lane-top, .road-case, .road, .sec-case, .sec, .hwy-case, .hwy, .track, .border { fill: none; stroke-linejoin: round; stroke-linecap: round; }
.river { stroke: #aad3df; stroke-width: 8; }
.lane { stroke: #d6d3cf; stroke-width: 7; }
.lane-top { stroke: #fbfaf8; stroke-width: 3; }
.road-case { stroke: #c9c6c2; stroke-width: 10; }
.road { stroke: #fff; stroke-width: 7; }
.sec-case { stroke: #c9cc9a; stroke-width: 14; }
.sec { stroke: #f3f6b4; stroke-width: 10; }
.hwy-case { stroke: #dd9a88; stroke-width: 20; }
.hwy { stroke: #f8b19c; stroke-width: 16; }
.track { stroke: #dcb184; stroke-width: 3; stroke-dasharray: 12 9; }
.border { stroke: #b9a3ba; stroke-width: 5; stroke-dasharray: 34 8 6 8; }
.labels text { fill: #444; stroke: rgba(255, 255, 255, .6); stroke-width: 2px; paint-order: stroke; font: 11px "Noto Sans", sans-serif; text-anchor: middle; }
.labels .town { font-size: 13px; }
.labels .edge { text-anchor: end; }
.road-names text { fill: #5d3f38; font: 9px "Noto Sans", sans-serif; text-anchor: middle; }
.ref { fill: #8a5a50; font: 10px "Noto Sans", sans-serif; text-anchor: middle; }
.zoomer { position: absolute; top: 12px; left: 12px; display: flex; flex-direction: column; gap: 1px; border: 1px solid #8aa6b0; border-radius: 4px; background: #ccc; box-shadow: 0 1px 3px rgba(0, 0, 0, .4); overflow: hidden; }
.zoomer button { width: 31px; height: 30px; padding: 0; border: 0; background: #fff; color: #000; font: bold 20px/30px "Liberation Sans", sans-serif; }
.credit { position: absolute; right: 0; bottom: 0; padding: 0 5px; background: rgba(255, 255, 255, .8); color: #333; font: 12px/18px "Liberation Sans", sans-serif; }
.credit a { color: #0078a8; }
.flag { display: inline-block; width: 12px; height: 8px; margin-right: 4px; background: linear-gradient(#4c7be1 50%, #ffd500 50%); }
.map-foot { display: flex; align-items: center; gap: 8px; min-height: 42px; margin-top: 29px; padding: 0 18px 0 17px; border-top: 1px solid #dcdddd; border-radius: 0 0 8px 8px; background: #f7f7f7; color: #343a40; font-size: 13px; }
.foot-time { font-size: 14px; }
.heat-scale { width: 155px; height: 10px; background: linear-gradient(90deg, #3ff, #0ff 14%, #00f 43%, #f0f 72%, #f00); }

.range { display: flex; align-items: center; gap: 8px; height: 33px; padding: 0 9px; border: 0; border-radius: 4px; background: #f8f9fa; color: #000; font-size: 14px; }
.range .caret { border-width: 4px; border-bottom: 0; }
.trend-body { padding: 16px 16px 0; }
.tabs { display: flex; margin-bottom: 48px; border-bottom: 1px solid #dee2e6; }
.tabs button { height: 44px; margin-bottom: -1px; padding: 0 17px; border: 1px solid transparent; border-radius: 6px 6px 0 0; background: none; color: #0d6efd; font-size: 15px; }
.tabs .on { border-color: #dee2e6 #dee2e6 #fff; background: #fff; color: #000; }
.chart { width: 100%; height: auto; }
.chart text { fill: #666; font: 12px "Liberation Sans", sans-serif; }
.chart .b { font-weight: bold; }
.trend-actions { display: flex; justify-content: space-between; margin-top: 20px; padding: 0 3px; }

.barangays { margin-top: 41px; }
.brgy-grid { display: grid; grid-template-columns: repeat(12, minmax(0, 1fr)); align-items: start; gap: 32px 16px; padding: 16px 17px 33px; }
.tile { border-radius: 8px; background: #fff; box-shadow: 0 2px 4px rgba(0, 0, 0, .1); overflow: hidden; }
.brgy-grid .summary { grid-column: span 2; display: flex; justify-content: space-between; padding: 8px 16px; background: #f8f9fa; font-size: 15px; white-space: nowrap; }
.summary h3 { font-size: 19px; font-weight: 500; line-height: 26px; }
.right { text-align: right; }
.brgy { grid-column: span 4; }
.brgy:nth-child(4) { grid-column: 1 / span 4; }
.brgy h3 { padding: 6px 16px; border-bottom: 1px solid #dcdddd; background: #f8f9fa; font-size: 16px; font-weight: 500; }
.brgy dl { display: flex; flex-direction: column; gap: 9px; padding: 18px 16px 46px; }
.brgy dl div { display: flex; justify-content: space-between; }
.brgy dt { font-weight: 600; }
.brgy dd { color: #343a40; }
.badge { display: block; padding: 0 6px; margin: 1px 0; border-radius: 6px; background: #6c757d; color: #fff; font-size: 12px; font-weight: 600; line-height: 22px; }
.brgy footer { padding: 8px 14px 8px 18px; border-top: 1px solid #dcdddd; background: #f7f7f7; }
.brgy footer button { display: flex; justify-content: center; align-items: center; gap: 7px; width: 100%; height: 32px; border: 0; border-radius: 4px; background: #0d6efd; color: #fff; font-size: 14px; }

.alerts { margin-top: 54px; }
.affected { margin-top: 53px; }
.empty { display: flex; flex-direction: column; align-items: center; padding: 40px 16px 58px; color: #565a5d; }
.empty.roomy { padding: 65px 16px 82px; }
.empty h3 { margin-top: 17px; font-size: 19px; font-weight: 600; line-height: 28px; }
.empty p { margin-top: 6px; color: #6c757d; }
```
